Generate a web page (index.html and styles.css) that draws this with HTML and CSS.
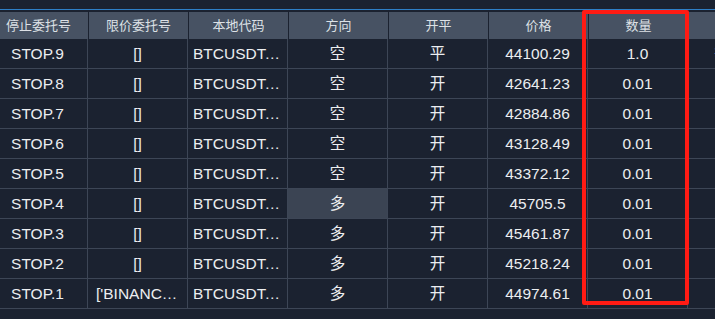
FILE: index.html
```html
<!DOCTYPE html>
<html lang="zh">
<head>
<meta charset="utf-8">
<link rel="stylesheet" href="styles.css">
</head>
<body>
<div class="topbar"></div>
<div class="viewport">
  <div class="table">
    <div class="row head">
      <div class="cell">停止委托号</div>
      <div class="cell">限价委托号</div>
      <div class="cell">本地代码</div>
      <div class="cell">方向</div>
      <div class="cell">开平</div>
      <div class="cell">价格</div>
      <div class="cell">数量</div>
      <div class="cell">状态</div>
    </div>
    <div class="row"><div class="cell">STOP.9</div><div class="cell">[]</div><div class="cell left">BTCUSDT.BINANCE</div><div class="cell">空</div><div class="cell">平</div><div class="cell">44100.29</div><div class="cell">1.0</div><div class="cell status">等待中</div></div>
    <div class="row"><div class="cell">STOP.8</div><div class="cell">[]</div><div class="cell left">BTCUSDT.BINANCE</div><div class="cell">空</div><div class="cell">开</div><div class="cell">42641.23</div><div class="cell">0.01</div><div class="cell"></div></div>
    <div class="row"><div class="cell">STOP.7</div><div class="cell">[]</div><div class="cell left">BTCUSDT.BINANCE</div><div class="cell">空</div><div class="cell">开</div><div class="cell">42884.86</div><div class="cell">0.01</div><div class="cell"></div></div>
    <div class="row"><div class="cell">STOP.6</div><div class="cell">[]</div><div class="cell left">BTCUSDT.BINANCE</div><div class="cell">空</div><div class="cell">开</div><div class="cell">43128.49</div><div class="cell">0.01</div><div class="cell"></div></div>
    <div class="row"><div class="cell">STOP.5</div><div class="cell">[]</div><div class="cell left">BTCUSDT.BINANCE</div><div class="cell">空</div><div class="cell">开</div><div class="cell">43372.12</div><div class="cell">0.01</div><div class="cell"></div></div>
    <div class="row"><div class="cell">STOP.4</div><div class="cell">[]</div><div class="cell left">BTCUSDT.BINANCE</div><div class="cell selected">多</div><div class="cell">开</div><div class="cell">45705.5</div><div class="cell">0.01</div><div class="cell"></div></div>
    <div class="row"><div class="cell">STOP.3</div><div class="cell">[]</div><div class="cell left">BTCUSDT.BINANCE</div><div class="cell">多</div><div class="cell">开</div><div class="cell">45461.87</div><div class="cell">0.01</div><div class="cell"></div></div>
    <div class="row"><div class="cell">STOP.2</div><div class="cell">[]</div><div class="cell left">BTCUSDT.BINANCE</div><div class="cell">多</div><div class="cell">开</div><div class="cell">45218.24</div><div class="cell">0.01</div><div class="cell"></div></div>
    <div class="row"><div class="cell">STOP.1</div><div class="cell left2">['BINANCE_SPOT.1']</div><div class="cell left">BTCUSDT.BINANCE</div><div class="cell">多</div><div class="cell">开</div><div class="cell">44974.61</div><div class="cell">0.01</div><div class="cell"></div></div>
  </div>
</div>
<div class="mark"></div>
</body>
</html>
```

FILE: styles.css
```css
html, body {
  margin: 0;
  padding: 0;
  background: #1b2230;
  width: 715px;
  height: 319px;
  overflow: hidden;
}
body {
  position: relative;
  font-family: "Liberation Sans", "Noto Sans CJK SC", sans-serif;
  color: #eceef0;
}
.topbar {
  height: 9px;
  border-bottom: 1px solid #2e7fc6;
  margin-bottom: 2px;
}
.viewport {
  width: 715px;
  overflow: hidden;
}
.table {
  margin-left: -12px;
  width: 900px;
}
.row {
  display: grid;
  grid-template-columns: repeat(8, 100px);
}
.cell {
  box-sizing: border-box;
  height: 30px;
  border-right: 1px solid #3d4656;
  border-bottom: 1px solid #3d4656;
  font-size: 15.5px;
  line-height: 29px;
  text-align: center;
  white-space: nowrap;
  overflow: hidden;
  text-overflow: ellipsis;
  padding: 0 5px;
}
.cell.left {
  text-align: left;
}
.cell.left2 {
  text-align: left;
  padding-left: 8px;
}
.cell.selected {
  background: #3b4453;
}
.cell.status {
  text-overflow: clip;
}
.head {
  padding-left: 1px;
}
.head .cell {
  height: 27px;
  line-height: 27px;
  background: #475263;
  border-right: 1px solid #1b2230;
  border-bottom: none;
  font-size: 13px;
  color: #dde1e6;
}
.mark {
  position: absolute;
  left: 582px;
  top: 10px;
  width: 107px;
  height: 295px;
  box-sizing: border-box;
  border: 4px solid #ff1b14;
  border-radius: 2px;
}
```
